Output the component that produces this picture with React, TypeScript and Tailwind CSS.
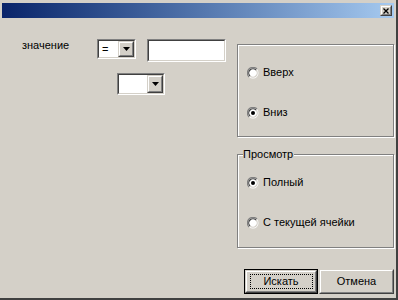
import React from "react";

function Sunken({ className, children }: { className: string; children?: React.ReactNode }) {
  return (
    <div className={`border border-[#808080] border-r-white border-b-white ${className}`}>
      <div className="flex h-full w-full border border-[#404040] border-r-[#d4d0c8] border-b-[#d4d0c8] bg-white">
        {children}
      </div>
    </div>
  );
}

function Raised({ className, children }: { className: string; children?: React.ReactNode }) {
  return (
    <div className={`border border-[#d4d0c8] border-r-[#404040] border-b-[#404040] bg-[#d4d0c8] ${className}`}>
      <div className="flex h-full w-full items-center justify-center border border-white border-r-[#808080] border-b-[#808080]">
        {children}
      </div>
    </div>
  );
}

function Arrow() {
  return (
    <svg width="7" height="4" viewBox="0 0 7 4">
      <path d="M0 0h7L3.5 4z" fill="#000" />
    </svg>
  );
}

function Combo({ w, h, value }: { w: string; h: string; value?: string }) {
  return (
    <Sunken className={`${w} ${h}`}>
      <div className="flex flex-1 items-center pl-[3px] text-[11px] leading-none">{value}</div>
      <Raised className="h-full w-[16px]">
        <Arrow />
      </Raised>
    </Sunken>
  );
}

function Radio({ label, checked }: { label: string; checked?: boolean }) {
  return (
    <div className="flex h-[13px] items-center">
      <svg width="12" height="12" viewBox="0 0 12 12" className="ml-[9px] shrink-0">
        <circle cx="6" cy="6" r="5.5" fill="#fff" />
        <path d="M10 2A5.5 5.5 0 0 0 2 10" stroke="#808080" strokeWidth="1.2" fill="none" />
        <path d="M9 3A4.2 4.2 0 0 0 3 9" stroke="#404040" strokeWidth="1.2" fill="none" />
        <path d="M3 9A4.2 4.2 0 0 0 9 3" stroke="#d4d0c8" strokeWidth="1.2" fill="none" />
        {checked && <circle cx="6" cy="6" r="2" fill="#000" />}
      </svg>
      <span className="ml-[4px] whitespace-nowrap">{label}</span>
    </div>
  );
}

function Group({ className, children }: { className: string; children: React.ReactNode }) {
  return (
    <div
      className={`border border-[#808080] shadow-[inset_1px_1px_0_#fff,1px_1px_0_#fff] ${className}`}
    >
      {children}
    </div>
  );
}

export default function App() {
  return (
    <div
      className="flex h-[300px] w-[398px] flex-col border-r-2 border-b-2 border-[#404040] bg-[#d4d0c8] pt-[3px] pl-[2px] text-[11px] leading-[13px] text-black"
      style={{ fontFamily: '"Liberation Sans", Arial, sans-serif' }}
    >
      <div className="flex h-[15px] w-[392px] items-center justify-end bg-gradient-to-r from-[#0a246a] to-[#a6caf0] pr-[2px]">
        <Raised className="h-[11px] w-[12px]">
          <svg width="6" height="6" viewBox="0 0 6 6">
            <path d="M0.5 0.5l5 5M5.5 0.5l-5 5" stroke="#000" strokeWidth="1.3" />
          </svg>
        </Raised>
      </div>

      <div className="flex flex-1">
        <div className="flex w-[235px] flex-col">
          <div className="mt-[21px] flex items-start">
            <div className="w-[95px] shrink-0 pl-[20px]">значение</div>
            <Combo w="w-[39px]" h="h-[20px]" value="=" />
            <Sunken className="ml-[11px] h-[23px] w-[79px]" />
          </div>
          <div className="mt-[11px] flex pl-[115px]">
            <Combo w="w-[48px]" h="h-[22px]" />
          </div>
        </div>

        <div className="flex w-[157px] flex-col">
          <Group className="mt-[26px] flex h-[93px] flex-col gap-[27px] pt-[21px]">
            <Radio label="Вверх" />
            <Radio label="Вниз" checked />
          </Group>

          <Group className="relative mt-[17px] flex h-[94px] flex-col gap-[27px] pt-[21px]">
            <span className="absolute top-[-7px] left-[5px] bg-[#d4d0c8] pr-[1px]">Просмотр</span>
            <Radio label="Полный" checked />
            <Radio label="С текущей ячейки" />
          </Group>

          <div className="mt-[21px] flex pl-[7px]">
            <div className="h-[25px] w-[75px] border border-black">
              <Raised className="h-full w-full">
                <div className="flex h-[15px] w-[63px] items-center justify-center border border-dotted border-black">
                  Искать
                </div>
              </Raised>
            </div>
            <Raised className="ml-[1px] h-[25px] w-[75px] shrink-0">Отмена</Raised>
          </div>
        </div>
      </div>
    </div>
  );
}
